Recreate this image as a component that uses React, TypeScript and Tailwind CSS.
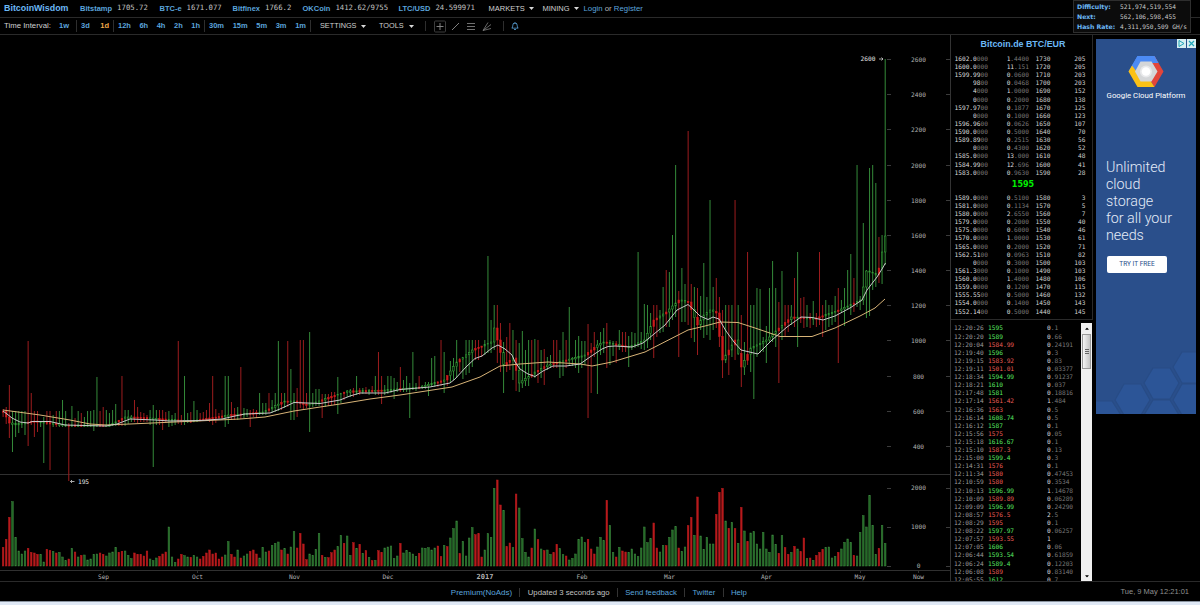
import { FaCaretDown, FaRegBell } from 'react-icons/fa'

const tickers = [
    { name: 'Bitstamp', value: '1705.72', width: 'w-[79.5px]' },
    { name: 'BTC-e', value: '1671.077', width: 'w-[73px]' },
    { name: 'Bitfinex', value: '1766.2', width: 'w-[70px]' },
    { name: 'OKCoin', value: '1412.62/9755', width: 'w-[96px]' },
    { name: 'LTC/USD', value: '24.599971', width: 'w-[90px]' },
]

const intervals = [
    { items: ['1w'], className: 'w-[22px]' },
    { items: ['3d', '1d'], className: 'w-[37px]' },
    { items: ['12h', '6h', '4h', '2h', '1h'], className: 'w-[91px]' },
    { items: ['30m', '15m', '5m', '3m', '1m'], className: 'w-[106px]' },
]

const network = [
    { label: 'Difficulty:', value: '521,974,519,554' },
    { label: 'Next:', value: '562,106,598,455' },
    { label: 'Hash Rate:', value: '4,311,950,509 GH/s' },
]

// price, amount, depth price, depth total. The part after | is dimmed.
const asks = [
    ['1602.0|000', '1|.4400', '1730', '205'],
    ['1600.0|000', '11|.151', '1720', '205'],
    ['1599.99|00', '0|.0600', '1710', '203'],
    ['98|00', '0|.0468', '1700', '203'],
    ['4|000', '1|.0000', '1690', '152'],
    ['0|000', '0|.2000', '1680', '138'],
    ['1597.97|00', '0|.1877', '1670', '125'],
    ['0|000', '0|.1000', '1660', '123'],
    ['1596.96|00', '0|.0626', '1650', '107'],
    ['1590.0|000', '0|.5000', '1640', '70'],
    ['1589.89|00', '0|.2515', '1630', '56'],
    ['0|000', '0|.4300', '1620', '52'],
    ['1585.0|000', '13|.000', '1610', '48'],
    ['1584.99|00', '12|.696', '1600', '41'],
    ['1583.0|000', '0|.9630', '1590', '28'],
]

const bids = [
    ['1589.0|000', '0|.5100', '1580', '3'],
    ['1581.0|000', '0|.1134', '1570', '5'],
    ['1580.0|000', '2|.6550', '1560', '7'],
    ['1579.0|000', '0|.2000', '1550', '40'],
    ['1575.0|000', '0|.6000', '1540', '46'],
    ['1570.0|000', '1|.0000', '1530', '61'],
    ['1565.0|000', '0|.2000', '1520', '71'],
    ['1562.51|00', '0|.0963', '1510', '82'],
    ['0|000', '0|.3000', '1500', '103'],
    ['1561.3|000', '0|.1000', '1490', '103'],
    ['1560.0|000', '1|.4000', '1480', '106'],
    ['1559.0|000', '0|.1200', '1470', '115'],
    ['1555.55|00', '0|.5000', '1460', '132'],
    ['1554.0|000', '0|.1400', '1450', '143'],
    ['1552.14|00', '0|.5000', '1440', '145'],
]

const trades = [
    ['12:20:26', 'g', '1595', '0|.1'],
    ['12:20:20', 'g', '1589', '0|.66'],
    ['12:20:04', 'r', '1584.99', '0|.24191'],
    ['12:19:40', 'g', '1596', '0|.3'],
    ['12:19:15', 'r', '1583.92', '0|.83'],
    ['12:19:11', 'r', '1501.01', '0|.03377'],
    ['12:18:34', 'g', '1594.99', '0|.91237'],
    ['12:18:21', 'g', '1610', '0|.037'],
    ['12:17:48', 'g', '1581', '0|.18816'],
    ['12:17:14', 'r', '1561.42', '1|.484'],
    ['12:16:36', 'r', '1563', '0|.5'],
    ['12:16:14', 'g', '1608.74', '0|.5'],
    ['12:16:12', 'g', '1587', '0|.1'],
    ['12:15:56', 'r', '1575', '0|.05'],
    ['12:15:18', 'g', '1616.67', '0|.1'],
    ['12:15:10', 'r', '1587.3', '0|.13'],
    ['12:15:00', 'g', '1599.4', '0|.3'],
    ['12:14:31', 'r', '1576', '0|.1'],
    ['12:11:34', 'r', '1580', '0|.47453'],
    ['12:10:59', 'r', '1580', '0|.3534'],
    ['12:10:13', 'g', '1596.99', '1|.14678'],
    ['12:10:09', 'r', '1589.89', '0|.06289'],
    ['12:09:09', 'g', '1596.99', '0|.24290'],
    ['12:08:57', 'r', '1576.5', '2|.5'],
    ['12:08:29', 'r', '1595', '0|.1'],
    ['12:08:22', 'g', '1597.97', '0|.06257'],
    ['12:07:57', 'r', '1593.55', '1|'],
    ['12:07:05', 'g', '1606', '0|.06'],
    ['12:06:44', 'g', '1593.54', '0|.61859'],
    ['12:06:24', 'g', '1589.4', '0|.12203'],
    ['12:06:08', 'r', '1589', '0|.83140'],
    ['12:05:55', 'g', '1612', '0|.7'],
]

// direction + volume, high, low for each day
const days = `
r56,409,417 r80,407,424 r146,385,438 g193,411,452 g86,411,437 g45,411,433 g36,411,428 g45,411,435 r53,341,446 r41,393,425
r39,411,437 r35,411,432 g35,421,427 g12,417,463 r50,411,425 r46,411,470 g44,415,427 r39,411,427 g41,411,427 g27,400,427
g16,411,427 r21,423,481 g53,406,427 r42,418,427 g27,411,427 r32,413,427 g33,417,427 g18,411,427 g21,411,427 g35,410,431
g36,377,427 r39,411,426 r35,407,427 g30,410,427 g39,413,427 g42,410,426 g56,404,426 r41,420,426 r44,376,426 g45,410,426
g32,410,424 g22,415,422 r39,400,422 r35,407,423 r35,412,422 r30,413,422 r45,415,422 g21,410,425 g16,405,467 g24,410,425
r29,410,425 r36,410,430 r42,412,423 g117,411,427 g27,415,426 g11,413,425 r21,341,424 r35,415,425 g31,376,425 g27,413,423
r26,412,423 g32,401,422 g27,410,422 r21,413,421 r29,412,420 r39,410,421 r48,403,422 r36,376,425 r39,409,423 r21,413,420
r27,410,420 g33,376,427 g73,376,424 r35,402,420 r27,408,420 g48,407,420 r24,367,419 g30,408,418 g36,409,417 r44,410,427
r48,409,417 r36,410,418 g24,393,415 g56,403,415 g42,403,415 r45,393,413 g62,400,413 g68,393,412 g72,341,411 r48,393,410
g52,393,408 r36,341,407 g57,369,420 g103,393,420 r54,388,417 r98,340,408 r66,340,409 r19,393,408 g36,332,432 g32,393,407
g50,389,406 g98,389,406 r32,394,418 g26,394,407 r25,394,406 r40,392,405 r48,392,405 g58,377,414 g92,394,403 r68,392,400
g90,390,397 g32,389,397 r70,388,397 g53,376,395 r65,388,395 g38,388,394 r46,387,394 g26,389,395 r16,386,393 g17,376,395
r46,352,395 r41,376,404 g54,385,395 g57,376,394 g60,376,393 g22,378,399 g30,382,392 r68,367,392 g39,380,392 g46,376,392
g40,383,418 g36,352,390 g29,383,391 r38,376,389 g54,385,389 g53,382,389 g55,382,396 g48,358,387 g54,356,387 r60,383,387
r28,340,386 g62,352,393 r58,376,386 g84,361,383 g112,358,380 g135,340,378 r37,358,372 g74,358,379 g30,340,375 g84,340,373
g115,340,367 r94,340,360 r97,340,360 r27,347,357 g48,340,355 g97,256,353 g86,320,353 g233,305,350 r258,305,363 r183,323,372
g167,342,393 r58,337,372 r69,323,370 g55,330,380 r216,340,391 g174,343,392 g82,331,388 g41,350,386 g27,340,386 r54,340,378
g111,339,378 r79,340,383 g51,350,378 r46,349,385 g48,357,370 g35,355,368 r40,340,368 r65,340,368 g52,350,378 g34,332,376
r30,340,368 g18,307,366 g23,357,366 g36,340,368 g80,336,373 g87,341,368 g70,341,365 r80,324,418 r51,343,393 r36,332,357
g57,340,394 g86,332,355 g76,328,353 r197,323,368 g122,340,365 g41,341,356 r27,341,363 g56,330,350 r45,332,352 r42,332,352
g41,336,367 g51,332,350 g36,333,348 g28,252,347 g54,332,349 g117,304,350 g70,305,348 g82,313,340 r129,305,358 r54,305,337
g42,310,333 g62,287,332 r61,270,327 g86,272,327 g108,235,320 g118,165,317 r54,291,357 g44,268,322 g57,284,322 r121,131,325
r146,284,338 g92,287,342 r207,288,355 g90,296,330 g50,263,338 g86,297,335 g66,200,340 g66,287,330 r155,278,328 r221,297,347
r233,310,378 g135,305,363 r113,305,375 g131,305,357 r112,200,360 g68,305,355 r176,315,387 g105,342,375 r73,252,365 g99,305,372
g103,305,399 g66,288,357 g51,289,353 g101,337,352 g51,326,363 g41,288,343 g93,261,342 g65,288,347 r38,302,383 g91,271,340
r55,305,337 r35,305,332 g41,305,325 r59,278,327 g51,252,347 r43,298,323 r84,297,328 g22,305,327 r24,313,328 g17,301,325
r32,313,327 r41,252,325 r50,305,337 g56,300,330 g57,305,327 g24,305,325 g29,296,322 r41,288,363 g51,300,313 g71,288,326
g81,270,310 g71,254,315 r32,278,312 g30,165,307 g101,296,310 g151,223,305 g117,270,318 g212,168,316 g122,165,290 g35,183,287
r53,237,283 g122,235,284 g68,59,265
`
    .trim()
    .split(/\s+/)
    .map((day) => {
        const [volume, high, low] = day.slice(1).split(',').map(Number)
        return { up: day[0] === 'g', volume: volume / 3, high, low }
    })

// closing level, [day, y]
const closes = [
    [0, 411], [2, 423], [4, 424], [10, 421], [20, 425], [34, 425], [39, 417], [42, 417], [60, 421], [72, 415],
    [83, 412], [90, 401], [93, 401], [97, 405], [100, 402], [110, 391], [122, 390], [133, 387], [141, 380], [145, 362],
    [150, 350], [156, 342], [157, 328], [158, 340], [160, 365], [163, 358], [165, 383], [170, 372], [174, 365], [186, 355],
    [190, 345], [192, 342], [200, 347], [205, 340], [208, 320], [212, 312], [216, 300], [219, 302], [222, 325], [224, 315],
    [226, 310], [228, 313], [230, 360], [234, 340], [236, 367], [239, 348], [244, 340], [248, 328], [252, 317], [260, 318],
    [268, 309], [274, 300], [275, 287], [276, 271], [279, 275], [280, 268], [281, 252], [282, 236],
]

const fastLine = '3,411 7,414 12,418 20,422 28,423 32,421.5 50,421.5 65,425 106,426 117,424 130,419 155,420 170,421 200,420.5 222,419 235,416 245,414 270,413 280,409 294,402.5 320,403.5 340,400 350,396 360,393 385,393 400,389.5 430,387 450,383 455,379 466,367 475,358.5 482,356 492,348 498,345 505,349 512,355 515,362 520,369 528,374 535,376.5 543,371 553,366 566,366 580,364 590,357 602,349 608,346.5 615,346 632,347 643,343 654,334 665,325 677,310 688,304.5 694,310 700,316 708,319.5 713,317 719,319 726,331 734,342 741,350 758,354 765,347 772,340 787,327 801,317 812,317.5 823,320 835,316 850,308 862,300 867,290 877,277 882,269 885.5,263'
const slowLine = '3,410 40,415 70,420 90,424 106,425 130,424 197,421 240,419 265,417 294,411 340,404 370,399 400,395 452,387 480,377 500,366 520,364 548,362 580,364 592,366 612,362 645,352 688,330 705,326 720,322 738,322.5 755,328 780,336.5 812,336.5 835,328 860,316 875,308 885,299'

const priceTicks = [2600, 2400, 2200, 2000, 1800, 1600, 1400, 1200, 1000, 800, 600, 400]
const volumeTicks = [
    { label: '2000', y: 488 },
    { label: '1000', y: 527 },
    { label: '0', y: 566 },
]
const months = [
    ['Sep', 103.5], ['Oct', 197.5], ['Nov', 294.5], ['Dec', 388], ['2017', 485], ['Feb', 582], ['Mar', 669.5], ['Apr', 766.5], ['May', 860], ['Now', 918.5],
] as const

const mono = "font-['DejaVu_Sans_Mono',monospace]"

function closeAt(day: number) {
    const next = closes.findIndex(([d]) => d >= day)
    if (next <= 0) return closes[0][1]
    const [d0, y0] = closes[next - 1]
    const [d1, y1] = closes[next]
    return y0 + ((y1 - y0) * (day - d0)) / (d1 - d0)
}

function Dimmed({ text }: { text: string }) {
    const [bright, dim] = text.split('|')
    return (
        <>
            <span className="text-[#dcdcdc]">{bright}</span>
            <span className="text-[#787878]">{dim}</span>
        </>
    )
}

function Caret() {
    return (
        <svg className="h-[3px] w-[5px]" viewBox="0 0 5 3">
            <path d="M0 0h5l-2.500 3z" fill="#d8d8d8" />
        </svg>
    )
}

function TopBar() {
    return (
        <div className="flex h-[18px] shrink-0 items-center border-b border-[#2a2a2a] pl-1 text-[7.5px] whitespace-nowrap">
            <span className="w-[76px] text-[8.9px] font-bold text-[#6cb8f5]">BitcoinWisdom</span>
            {tickers.map((t) => (
                <div key={t.name} className={`flex items-center gap-[5px] ${t.width}`}>
                    <span className="font-bold text-[#5ba4dc]">{t.name}</span>
                    <span className={`${mono} text-[7.3px] text-[#c0c0c0]`}>{t.value}</span>
                </div>
            ))}
            <div className="flex w-[54px] items-center gap-1 text-[7.500px] text-[#d0d0d0]">
                MARKETS <Caret />
            </div>
            <div className="flex w-[41px] items-center gap-1 text-[7.500px] text-[#d0d0d0]">
                MINING <Caret />
            </div>
            <div className="text-[7.8px] text-[#b4b4b4]">
                <span className="text-[#5ba4dc]">Login</span> or <span className="text-[#5ba4dc]">Register</span>
            </div>
        </div>
    )
}

function ToolBar() {
    return (
        <div className="flex h-[17px] shrink-0 items-center border-b border-[#2a2a2a] pl-1 text-[7.8px] whitespace-nowrap text-[#d0d0d0]">
            <span className="w-[51px]">Time Interval:</span>
            {intervals.map((group) => (
                <div key={group.items[0]} className={`flex justify-between border-r border-[#2e2e2e] px-1 text-[7.5px] font-bold ${group.className}`}>
                    {group.items.map((item) => (
                        <span key={item} className={item === '1d' ? 'text-[#f0a848]' : 'text-[#5ba4dc]'}>{item}</span>
                    ))}
                </div>
            ))}
            <div className="ml-[9px] flex w-[59px] items-center gap-1 text-[7.3px]">
                SETTINGS <Caret />
            </div>
            <div className="flex w-[47px] items-center gap-[5px] border-r border-[#2e2e2e] text-[7.3px]">
                TOOLS <Caret />
            </div>
            <svg className="ml-[8px] h-[13px] w-[60px]" viewBox="0 0 60 13" fill="none" stroke="#808080">
                <rect x="0.5" y="1" width="11" height="11" rx="1" stroke="#3c3c3c" />
                <path d="M2.5 6.5h7M6 3v7" />
                <path d="M18 10l7-7" />
                <path d="M33 3.5h8M33 6.5h8M33 9.5h8" stroke="#707070" />
                <path d="M49 10.5l5-8M49 10.5l8-6M49 10.5l8-2" strokeWidth="0.8" />
            </svg>
            <div className="ml-[9px] flex h-2.5 items-center border-l border-[#2e2e2e] pl-[7px] text-[#5ba4dc]">
                <FaRegBell className="size-[8px]" />
            </div>
        </div>
    )
}

function Chart() {
    return (
        <svg className="h-[546px] w-[950px] shrink-0" viewBox="0 35 950 546">
            <g shapeRendering="crispEdges" stroke="#303030">
                <path d="M0 474.5H950M0 570.5H950" />
                {priceTicks.map((p) => {
                    const y = 59.5 + ((2600 - p) * 387) / 2200
                    return <path key={p} d={`M887 ${y}h4M946 ${y}h4`} stroke="#3c3c3c" />
                })}
                {volumeTicks.map((t) => (
                    <path key={t.label} d={`M887 ${t.y}h4M946 ${t.y}h4`} stroke="#3c3c3c" />
                ))}
                {months.map(([label, x]) => (
                    <path key={label} d={`M${x} 571v2`} />
                ))}
            </g>

            {days.map((day, i) => {
                const x = 3.1 + i * 3.128
                const from = closeAt(i - 1)
                const to = closeAt(i)
                const height = Math.max(1.4, Math.abs(to - from))
                return (
                    <g key={i}>
                        <rect x={x - 0.5} y={day.high} width="1" height={day.low - day.high} fill={day.up ? '#348a39' : '#9c1c1e'} />
                        <rect
                            x={x - 0.8}
                            y={Math.min(from, to)}
                            width="1.6"
                            height={height}
                            fill={day.up ? '#0a260b' : '#d01c1c'}
                            stroke={day.up ? '#38a83c' : '#d01c1c'}
                            strokeWidth="0.5"
                        />
                        <rect
                            x={x - 0.8}
                            y={566 - day.volume}
                            width="1.6"
                            height={day.volume}
                            fill={day.up ? '#246a27' : '#b81a1c'}
                            stroke={day.up ? '#3a843c' : '#b81a1c'}
                            strokeWidth="0.5"
                        />
                    </g>
                )
            })}

            <polyline points={slowLine} fill="none" stroke="#d8b478" strokeWidth="1" strokeLinejoin="round" />
            <polyline points={fastLine} fill="none" stroke="#c8c8c8" strokeWidth="1" strokeLinejoin="round" />

            <g className={mono} fontSize="6.2" textAnchor="middle" fill="#b0b0b0">
                {priceTicks.map((p) => (
                    <text key={p} x="918.5" y={62 + ((2600 - p) * 387) / 2200}>{p}</text>
                ))}
                {volumeTicks.map((t) => (
                    <text key={t.label} x="918.5" y={t.y + 2.3}>{t.label}</text>
                ))}
                {months.map(([label, x]) => (
                    <text key={label} x={x} y="578.7" fontWeight={label === '2017' ? 700 : 400} fontSize={label === '2017' ? 7 : 6.2}>{label}</text>
                ))}
                <text x="868" y="61.3" fill="#e4e4e4">2600</text>
                <text x="83.5" y="483.8" fill="#e4e4e4">195</text>
            </g>
            <path d="M879 59h4m-1.5 -1.5l1.5 1.5l-1.5 1.5M74.500 481.500h-4m1.500 -1.500l-1.500 1.500l1.500 1.500" fill="none" stroke="#d0d0d0" strokeWidth="0.8" />
        </svg>
    )
}

function Book({ rows }: { rows: string[][] }) {
    return (
        <div>
            {rows.map(([price, amount, level, total]) => (
                <div key={level} className="flex h-[8.13px] items-center">
                    <div className="w-[34px] text-right"><Dimmed text={price} /></div>
                    <div className="w-[41px] text-right"><Dimmed text={amount} /></div>
                    <div className="w-[21.5px] text-right text-[#cfcfcf]">{level}</div>
                    <div className="w-[35px] text-right text-[#cfcfcf]">{total}</div>
                </div>
            ))}
        </div>
    )
}

function Sidebar() {
    return (
        <aside className={`flex w-[143px] shrink-0 flex-col border-l border-[#333] text-[6.2px] whitespace-nowrap ${mono}`}>
            <div className="h-[285px] shrink-0 border-r border-b border-[#2a2a2a] pl-[3px]">
                <h2 className="h-[19.5px] text-center font-['Liberation_Sans',sans-serif] text-[8.9px] leading-[19px] font-bold text-[#6cb8f5]">Bitcoin.de BTC/EUR</h2>
                <Book rows={asks} />
                <div className="h-[17px] text-center font-['DejaVu_Sans',sans-serif] text-[8px] leading-[17px] font-bold text-[#00ee00]">1595</div>
                <Book rows={bids} />
            </div>
            <div className="flex h-[261px] overflow-hidden pt-[3px]">
                <div className="w-[130px] pt-px pl-[3px]">
                    {trades.map(([time, side, price, amount]) => (
                        <div key={time} className="flex h-[8.11px] items-center">
                            <span className="w-[34px] text-[#9a9a9a]">{time}</span>
                            <span className={`w-[59px] ${side === 'g' ? 'text-[#58e660]' : 'text-[#e65c54]'}`}>{price}</span>
                            <span><Dimmed text={amount} /></span>
                        </div>
                    ))}
                </div>
                <div className="flex w-[11px] flex-col items-center justify-between bg-[#f0f0f0] text-black">
                    <div className="flex w-full flex-col items-center">
                        <FaCaretDown className="my-[2.500px] size-[6px] rotate-180" />
                        <div className="flex h-[35px] w-[9px] flex-col items-center justify-center gap-px border border-[#9a9a9a] bg-linear-to-r from-[#f6f6f6] to-[#c4c4c4]">
                            <i className="h-px w-1 bg-[#666]" />
                            <i className="h-px w-1 bg-[#666]" />
                            <i className="h-px w-1 bg-[#666]" />
                        </div>
                    </div>
                    <FaCaretDown className="mb-[2px] size-[6px]" />
                </div>
            </div>
        </aside>
    )
}

function Ad() {
    return (
        <div className="relative mt-1 ml-[3px] h-[375px] w-[100px] overflow-hidden bg-[#2a4f8b] font-[Roboto,sans-serif] text-white">
            <svg className="absolute bottom-0 left-0 h-[70px] w-[100px]" viewBox="0 0 100 70" fill="#2c5597" stroke="#284c86" strokeWidth="1.2">
                <path d="M86 8h20l9 15l-9 16H86l-9-16zM57 24h17l9 15l-9 16H57l-9-16zM28 40h17l9 16l-9 15H28l-9-15zM-5 57h21l9 14H-5zM57 56h17l9 15H48zM86 40h20v31H86l-9-15z" />
            </svg>
            <div className="absolute top-0 right-0 flex gap-px">
                <svg className="h-[9px] w-[9px] bg-[#d8eef2]" viewBox="0 0 9 9" fill="none" stroke="#1fa5b8">
                    <path d="M2 1.500l5 3l-5 3z" />
                </svg>
                <svg className="h-[9px] w-[9px] bg-[#d8eef2]" viewBox="0 0 9 9" fill="none" stroke="#1fa5b8" strokeWidth="1.200">
                    <path d="M2 2l5 5M7 2l-5 5" />
                </svg>
            </div>
            <div className="relative flex flex-col items-center pt-[16px]">
                <svg className="h-[33px] w-[36px]" viewBox="0 0 36 33">
                    <path d="M9.500 1h17l4 7H13.500l-5 8.500h-8z" fill="#4c8bf5" />
                    <path d="M26.500 1l9 15.500l-9 15.500l-4.500-7l5-8.500l-5-8.500z" fill="#e2453a" />
                    <path d="M0.500 16.500L9.500 32h17l-4.500-7h-8.500l-5-8.500l3-6H4z" fill="#fbc116" />
                    <path d="M9.500 1h17l4 7H13.500L8.500 16.500l-4.500-6z" fill="#4c8bf5" />
                    <path d="M12.500 6.500h11l6 10l-6 10h-11l-5.500-10z" fill="#d4d6d8" />
                    <circle cx="18" cy="16.500" r="6" fill="#e8e9eb" />
                    <circle cx="18" cy="16.500" r="4.300" fill="#fff" />
                </svg>
                <div className="mt-[3px] text-[7.800px] leading-[10px] whitespace-nowrap">Google Cloud Platform</div>
            </div>
            <p className="relative mt-[58px] pl-[10px] text-[14.300px] leading-[17px] font-light text-[#e4ecf8]">
                Unlimited<br />cloud<br />storage<br />for all your<br />needs
            </p>
            <button className="relative mt-[12px] ml-[11px] flex h-[17px] w-[60px] items-center justify-center rounded-[2px] bg-white text-[6.500px] text-[#2a4f8b]">TRY IT FREE</button>
        </div>
    )
}

function Footer() {
    return (
        <div className="flex h-[20px] shrink-0 items-center justify-between border-t border-[#2a2a2a] pt-px text-[7.75px] whitespace-nowrap text-[#c0c0c0]">
            <div className="ml-[443.500px] flex divide-x divide-[#333] leading-[9px] *:px-[7.300px]">
                <span className="text-[8px] text-[#5ba4dc]">Premium(NoAds)</span>
                <span>Updated 3 seconds ago</span>
                <span className="text-[#5ba4dc]">Send feedback</span>
                <span className="text-[#5ba4dc]">Twitter</span>
                <span className="text-[#5ba4dc]">Help</span>
            </div>
            <span className="mr-[11px] text-[7.500px] text-[#909090]">Tue, 9 May 12:21:01</span>
        </div>
    )
}

export default function App() {
    return (
        <div className="relative flex h-[605px] w-[1200px] flex-col overflow-hidden bg-black font-['Liberation_Sans',Arial,sans-serif]">
            <TopBar />
            <ToolBar />
            <main className="flex h-[546px] shrink-0">
                <Chart />
                <Sidebar />
                <Ad />
            </main>
            <Footer />
            <div className="h-[4px] shrink-0 border-t border-[#8a94a0] bg-[#dfe8f5]" />

            {/* network stats, floats over both bars */}
            <div className="absolute top-0 left-[1073px] h-[33px] w-[118px] border border-[#2e2e2e] bg-[#0c0c0c] pl-[3px] text-[6.2px] whitespace-nowrap">
                {network.map((row) => (
                    <div key={row.label} className="flex h-[10.3px] items-center">
                        <span className="w-[43px] font-['DejaVu_Sans',sans-serif] font-bold text-[#6cb8f5]">{row.label}</span>
                        <span className={`${mono} text-[#c8c8c8]`}>{row.value}</span>
                    </div>
                ))}
            </div>
        </div>
    )
}
